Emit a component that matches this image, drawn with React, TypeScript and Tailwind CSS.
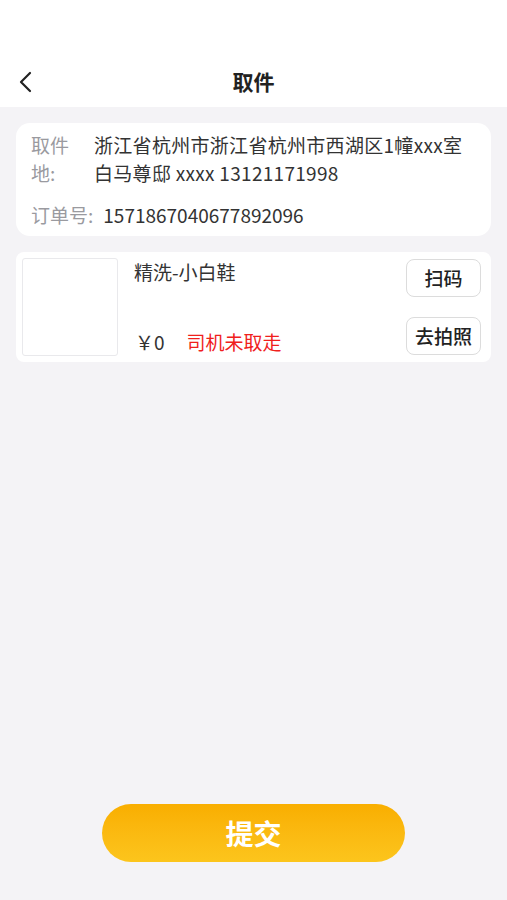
import React from "react";

const FONT = { fontFamily: '"Noto Sans CJK SC", "Noto Sans", sans-serif' };

const App: React.FC = () => {
  return (
    <div className="h-[900px] w-full bg-[#f4f3f6] flex flex-col" style={FONT}>
      {/* 顶部导航 */}
      <header className="bg-white h-[107px] flex flex-col justify-end">
        <div className="h-[50px] relative flex items-center justify-center">
          <button className="absolute left-[14px] top-1/2 -translate-y-1/2 p-1">
            <svg width="16" height="22" viewBox="0 0 16 22" fill="none">
              <path d="M12 2 L3 11 L12 20" stroke="#222" strokeWidth="2.2" strokeLinecap="round" strokeLinejoin="round" />
            </svg>
          </button>
          <h1 className="text-[21px] font-bold text-[#222]">取件</h1>
        </div>
      </header>

      {/* 地址卡片 */}
      <div className="mx-4 mt-4 bg-white rounded-[14px] pl-[15px] pr-3 pt-2 pb-[7px] text-[19px] leading-[28px]">
        <div className="flex">
          <div className="w-[40px] mr-[23px] text-[#9a9a9f] break-all shrink-0">取件地:</div>
          <div className="text-[#333] tracking-[0.3px]">
            浙江省杭州市浙江省杭州市西湖区1幢xxx室
            <br />
            白马尊邸 xxxx 13121171998
          </div>
        </div>
        <div className="flex mt-[14px]">
          <span className="text-[#9a9a9f] mr-[10px]">订单号:</span>
          <span className="text-[#333]">1571867040677892096</span>
        </div>
      </div>

      {/* 商品卡片 */}
      <div className="mx-4 mt-4 bg-white rounded-[8px] p-[6px] pr-[10px] flex">
        <div className="w-[96px] h-[98px] border border-[#e9e9ec] rounded-[3px] shrink-0" />
        <div className="flex-1 ml-4 flex flex-col justify-between text-[19px] leading-[26px]">
          <div className="text-[#333] mt-[1px]">精洗-小白鞋</div>
          <div className="flex items-center mb-[1px]">
            <span className="text-[#333] ml-[1px]">￥0</span>
            <span className="text-[#f0201c] ml-[22px]">司机未取走</span>
          </div>
        </div>
        <div className="flex flex-col justify-between py-[1px]">
          <button className="w-[75px] h-[38px] border border-[#dcdcdc] rounded-[8px] text-[19px] font-medium text-[#222]">扫码</button>
          <button className="w-[75px] h-[38px] border border-[#dcdcdc] rounded-[8px] text-[19px] font-medium text-[#222]">去拍照</button>
        </div>
      </div>

      <div className="flex-1" />

      {/* 提交 */}
      <div className="flex justify-center mb-[38px]">
        <button className="w-[303px] h-[58px] rounded-full bg-gradient-to-b from-[#f9ae00] to-[#fcc51c] text-white text-[28px] font-bold">
          提交
        </button>
      </div>
    </div>
  );
};

export default App;
